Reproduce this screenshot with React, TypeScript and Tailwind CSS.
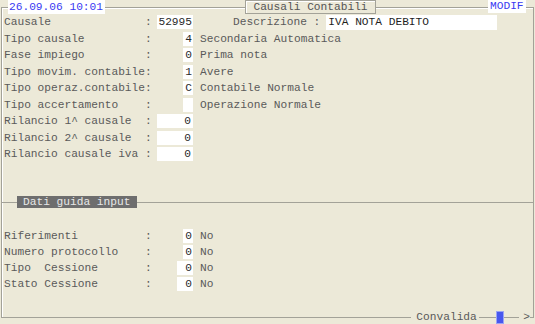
import React from "react";

type RowProps = {
  name: string;
  value?: string;
  boxW: string;
  desc?: string;
  pr?: string;
  extra?: React.ReactNode;
  h?: string;
};

function Row({ name, value, boxW, desc, pr, extra, h }: RowProps) {
  return (
    <div className={`flex items-start pl-[2px] ${h ?? "h-[16.5px]"}`}>
      <span className="w-[153px] whitespace-pre leading-[14px] text-[#5a5a5a]">
        {name.padEnd(21) + ":"}
      </span>
      <div className="flex w-[36px] justify-end">
        <div
          className={`h-[14px] ${boxW} bg-white text-right leading-[14px] text-[#2a2a2a] ${pr ?? "pr-[1px]"}`}
        >
          {value}
        </div>
      </div>
      {desc !== undefined && (
        <span className="ml-[7px] whitespace-pre leading-[14px] text-[#5a5a5a]">{desc}</span>
      )}
      {extra}
    </div>
  );
}

export default function App() {
  return (
    <div className="h-[324px] w-[535px] overflow-hidden bg-[#ece9d8] px-[1px] pt-[7px] font-['Liberation_Mono',monospace] text-[11.2px]">
      <div className="flex h-[311px] flex-col border border-[#a3a298] shadow-[inset_1px_1px_0_#ffffff]">
        {/* header */}
        <div className="-mt-[8px] flex h-[15px] items-start">
          <div className="ml-[6px] h-[14px] w-[97px] bg-white pl-[1px] leading-[14px] text-[#3a3af2]">
            26.09.06 10:01
          </div>
          <div className="ml-[140px] h-[14px] w-[131px] border border-[#a3a298] bg-[#ece9d8] text-center leading-[12px] text-[#555555] shadow-[inset_1px_1px_0_#ffffff]">
            Causali Contabili
          </div>
          <div className="ml-[112px] h-[13px] w-[38px] bg-white pl-[2px] leading-[13px] text-[#3a3af2]">
            MODIF
          </div>
        </div>

        {/* upper rows */}
        <Row
          name="Causale"
          value="52995"
          boxW="w-[36px]"
          extra={
            <>
              <span className="ml-[40px] whitespace-pre leading-[14px] text-[#5a5a5a]">Descrizione :</span>
              <div className="ml-[6px] h-[15px] w-[171px] bg-white pl-[2px] leading-[15px] text-[#1e1e1e]">
                IVA NOTA DEBITO
              </div>
            </>
          }
        />
        <Row name="Tipo causale" value="4" boxW="w-[10px]" desc="Secondaria Automatica" />
        <Row name="Fase impiego" value="0" boxW="w-[10px]" desc="Prima nota" />
        <Row name="Tipo movim. contabile" value="1" boxW="w-[10px]" desc="Avere" />
        <Row name="Tipo operaz.contabile" value="C" boxW="w-[10px]" desc="Contabile Normale" />
        <Row name="Tipo accertamento" value="" boxW="w-[10px]" desc="Operazione Normale" />
        <Row name="Rilancio 1^ causale" value="0" boxW="w-[36px]" pr="pr-[2px]" />
        <Row name="Rilancio 2^ causale" value="0" boxW="w-[36px]" pr="pr-[2px]" />
        <Row name="Rilancio causale iva" value="0" boxW="w-[36px]" pr="pr-[2px]" />

        {/* Dati guida input */}
        <div className="mt-[32.5px] flex h-[12px] items-center">
          <div className="h-px w-[15px] bg-[#a3a298]" />
          <div className="h-[12px] w-[120px] bg-[#6e6e6e] pl-[6px] leading-[12px] text-[#e8e8e8]">
            Dati guida input
          </div>
          <div className="h-px flex-1 bg-[#a3a298]" />
        </div>

        {/* lower rows */}
        <div className="mt-[21px] flex flex-col">
          <Row h="h-[16px]" name="Riferimenti" value="0" boxW="w-[10px]" desc="No" />
          <Row h="h-[16px]" name="Numero protocollo" value="0" boxW="w-[10px]" desc="No" />
          <Row h="h-[16px]" name="Tipo  Cessione" value="0" boxW="w-[16px]" desc="No" />
          <Row h="h-[16px]" name="Stato Cessione" value="0" boxW="w-[16px]" desc="No" />
        </div>

        {/* footer */}
        <div className="-mb-[7px] mt-auto flex h-[14px] items-center justify-end">
          <span className="bg-[#ece9d8] pl-[5px] pr-[2px] leading-[14px] text-[#5a5a5a]">Convalida</span>
          <div className="w-[17px]" />
          <div className="h-[13px] w-[8px] border border-[#9aa4f5] bg-[#4757ee]" />
          <div className="w-[15px]" />
          <span className="bg-[#ece9d8] pl-[4.5px] leading-[14px] text-[#5a5a5a]">&gt;</span>
          <div className="w-[3px]" />
        </div>
      </div>
    </div>
  );
}
